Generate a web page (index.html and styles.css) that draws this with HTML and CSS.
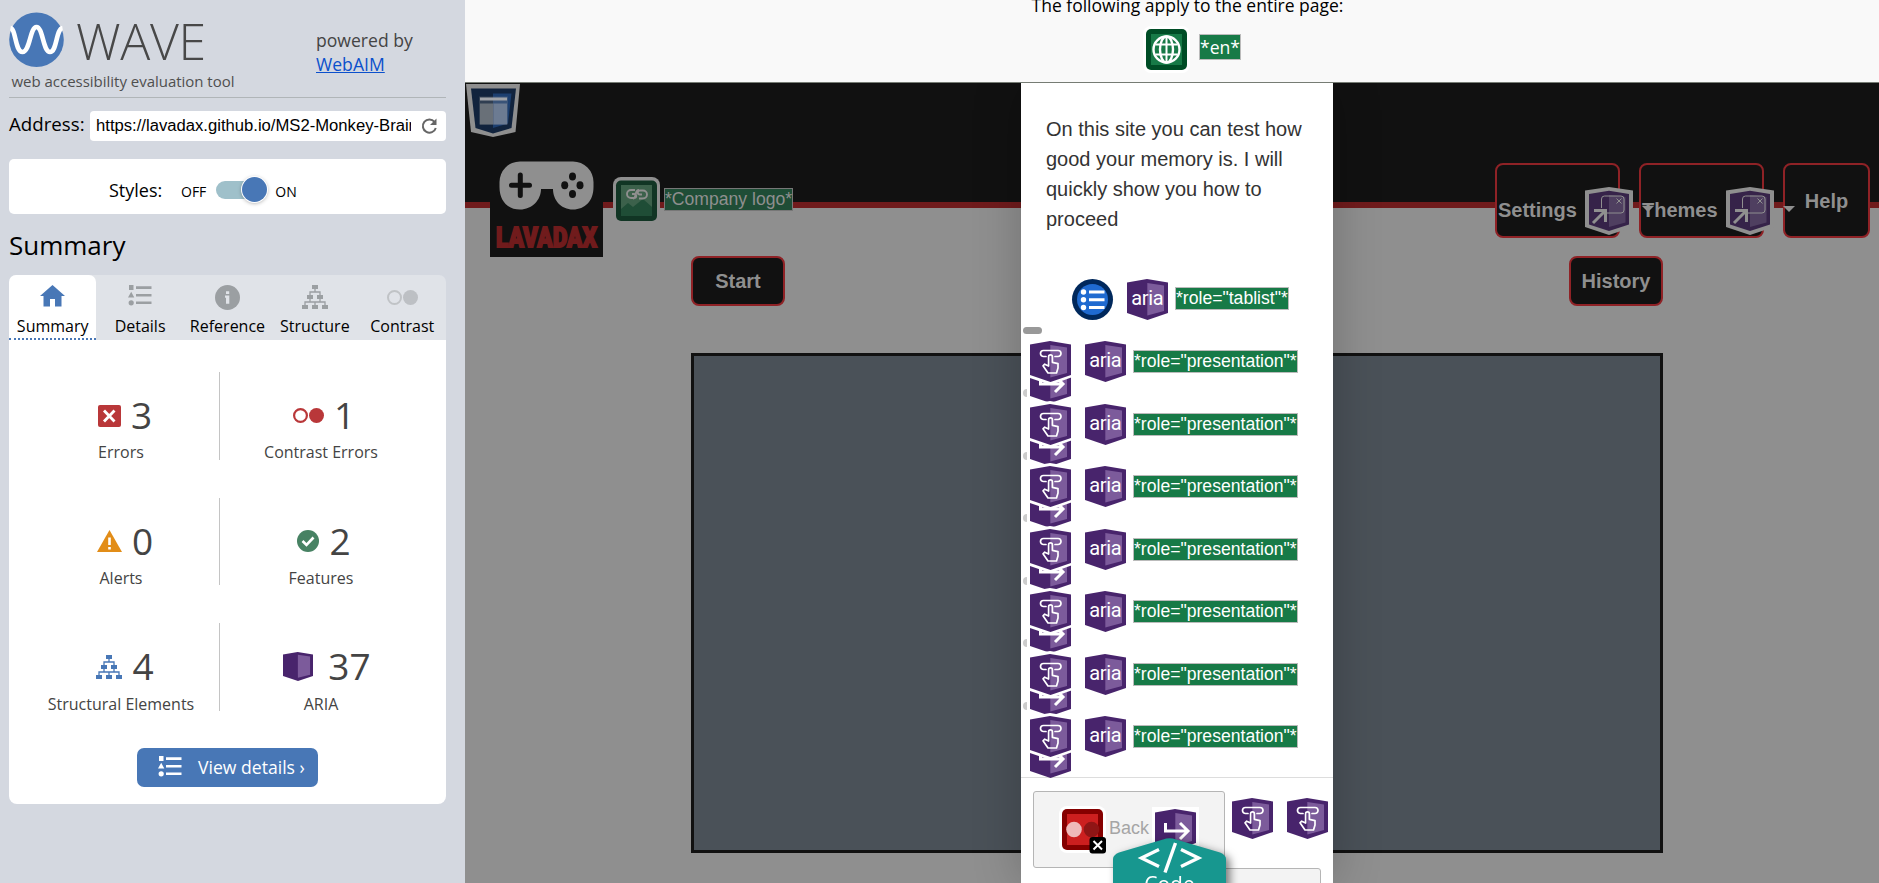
FILE: index.html
```html
<!DOCTYPE html>
<html lang="en">
<head>
<meta charset="utf-8">
<title>WAVE report</title>
<link rel="stylesheet" href="styles.css">
</head>
<body>
<svg width="0" height="0" class="defs" aria-hidden="true">
  <defs>
    <symbol id="cube" viewBox="0 0 41 41">
      <path d="M0 3.500L20 0l21 3.500V34l-20.500 7L0 34z" fill="#48246c"/>
      <path d="M20.300 4L37 6.500v25.500L20.300 36.500z" fill="#7c5b9b"/>
    </symbol>
    <symbol id="list" viewBox="0 0 24 21">
      <path d="M1 0h4.500v5H1zM3.200 6.800L6.300 12.500H0zM8 1.300h15.500v2.600H8zM8 8.900h15.500v2.600H8zM8 16.400h15.500V19H8z"/>
      <circle cx="3.200" cy="17.800" r="2.600"/>
    </symbol>
    <symbol id="tree" viewBox="0 0 26 24">
      <path d="M10 0h6v4h-6zM5 10h6v4H5zM15 10h6v4h-6zM0 20h6v4H0zM10 20h6v4h-6zM20 20h6v4h-6z"/>
      <path d="M13 4v3M8 10V7h10v3M8 14v3M18 14v3M3 20v-3h20v3M13 17v3" fill="none" stroke="currentColor" stroke-width="1.300"/>
    </symbol>
    <symbol id="tap" viewBox="0 0 41 41">
      <use href="#cube" width="41" height="41"/>
      <g fill="none" stroke="#fff" stroke-width="1.700" stroke-linejoin="round" stroke-linecap="round">
        <path d="M16 15.500h-2.500a3 3 0 0 1 0-6h14.500a3 3 0 0 1 0 6H25"/>
        <path d="M18.600 25V15.800a1.900 1.900 0 0 1 3.800 0v5.500l5.600 1.300v4.400l-1.500 5h-8.500l-5-7.200 1.700-1.600z"/>
      </g>
    </symbol>
    <symbol id="aria" viewBox="0 0 41 41">
      <use href="#cube" width="41" height="41"/>
      <text x="4.200" y="25.600" class="aria-word" textLength="32.500">aria</text>
    </symbol>
    <symbol id="arrow" viewBox="0 0 41 41">
      <use href="#cube" width="41" height="41"/>
      <path d="M10.500 14v8H31M25 14l8 8-8 8" fill="none" stroke="#fff" stroke-width="3"/>
    </symbol>
    <symbol id="popup" viewBox="0 0 48 48">
      <path d="M0 3.500L24 0l24 3.500V40L24 48 0 40z" fill="#8f8f8f"/>
      <path d="M4 7l20-3.300L44 7v30.500L24 44 4 37.500z" fill="#362349"/>
      <path d="M24 8l16.500 2v25.500L24 40z" fill="#4f3f60"/>
      <g fill="none" stroke="#8f8f8f">
        <path d="M16.500 21v-9a3 3 0 0 1 3-3H36a3 3 0 0 1 3 3v11a3 3 0 0 1-3 3H22"/>
        <path d="M31.500 11.500l5 5m0-5l-5 5"/>
        <path d="M8 36L20 24M9 23.500h11.500V35" stroke-width="3"/>
      </g>
    </symbol>
  </defs>
</svg>

<div class="app">
  <aside class="sidebar">
    <header class="brand">
      <svg class="brand-logo" width="240" height="97" viewBox="0 0 240 97">
        <circle cx="27.500" cy="39.700" r="27.300" fill="#4877b6"/>
        <path d="M1.500 28C7 29 6 52 13.500 52S21 27 27.500 27 34 52 41 52 47 29 53.500 28" fill="none" stroke="#fff" stroke-width="4.600"/>
        <text x="67" y="59.700" class="wordmark" textLength="130">WAVE</text>
        <text x="2.500" y="87" class="tagline" textLength="223">web accessibility evaluation tool</text>
      </svg>
      <p class="powered">powered by<br><a href="#">WebAIM</a></p>
    </header>

    <div class="address">
      <span class="address-label">Address:</span>
      <div class="address-field">
        <span class="address-url">https://lavadax.github.io/MS2-Monkey-Brain</span>
        <svg width="18" height="18" viewBox="0 0 18 18" fill="none" stroke="#666" stroke-width="2"><path d="M14.500 4.800A6.600 6.600 0 1 0 15.800 11"/><path d="M16.500 1.500v6.500H10z" fill="#666" stroke="none"/></svg>
      </div>
    </div>

    <div class="styles-box">
      <span class="styles-label">Styles:</span>
      <span class="switch-text">OFF</span>
      <span class="switch"><i></i></span>
      <span class="switch-text">ON</span>
    </div>

    <h1>Summary</h1>

    <nav class="tabs">
      <div class="tab active"><svg width="25" height="24" viewBox="0 0 25 24" fill="#4877b6"><path d="M12.500 0L25 11h-3.500v10.500H15V14h-5v7.500H3.500V11H0z"/></svg><span>Summary</span></div>
      <div class="tab"><svg width="24" height="21" class="grey list-icon"><use href="#list"/></svg><span>Details</span></div>
      <div class="tab"><svg width="25" height="25" viewBox="0 0 25 25"><circle cx="12.500" cy="12.500" r="12.500" fill="#9b9fa2"/><path d="M11 6.300h3.200v2.800H11zM10 10.500h4.300v8.200H11v-6h-1z" fill="#e0e3e8"/></svg><span>Reference</span></div>
      <div class="tab"><svg width="26" height="24" class="grey"><use href="#tree"/></svg><span>Structure</span></div>
      <div class="tab"><svg width="31" height="25" viewBox="0 0 31 25"><circle cx="7.500" cy="12.500" r="6.500" fill="none" stroke="#c0c3c6" stroke-width="2"/><circle cx="23.500" cy="12.500" r="7.500" fill="#bdc0c4"/></svg><span>Contrast</span></div>
    </nav>

    <section class="panel">
      <div class="stats">
        <div class="stat"><p><svg width="23" height="22" viewBox="0 0 23 22"><rect width="23" height="22" rx="2" fill="#b93739"/><path d="M6 5.500l10.500 11m0-11L6 16.500" stroke="#fff" stroke-width="2.800"/></svg><b>3</b></p><span>Errors</span></div>
        <div class="stat"><p><svg width="31" height="22" viewBox="0 0 31 22"><circle cx="7.500" cy="10.500" r="6.400" fill="none" stroke="#b93739" stroke-width="2.200"/><circle cx="23.500" cy="10.500" r="7.500" fill="#b93739"/></svg><b>1</b></p><span>Contrast Errors</span></div>
        <div class="stat"><p><svg width="25" height="22" viewBox="0 0 25 22"><path d="M12.500 0L25 22H0z" fill="#e28d18"/><path d="M11.200 7.500h2.600V15h-2.600zM11.200 17h2.600v2.500h-2.600z" fill="#fff"/></svg><b>0</b></p><span>Alerts</span></div>
        <div class="stat"><p><svg width="22" height="22" viewBox="0 0 22 22"><circle cx="11" cy="11" r="11" fill="#478263"/><path d="M5.500 11l4 4 7-7.500" fill="none" stroke="#fff" stroke-width="2.600"/></svg><b>2</b></p><span>Features</span></div>
        <div class="stat"><p><svg width="26" height="24" class="blue"><use href="#tree"/></svg><b>4</b></p><span>Structural Elements</span></div>
        <div class="stat wide"><p><svg width="30" height="29" viewBox="0 0 41 41" preserveAspectRatio="none"><use href="#cube" width="41" height="41"/></svg><b>37</b></p><span>ARIA</span></div>
      </div>
      <a class="view-details"><svg width="24" height="21" class="white"><use href="#list"/></svg>View details ›</a>
    </section>
  </aside>

  <main class="page">
    <section class="notice">
      <p>The following apply to the entire page:</p>
      <div class="notice-row">
        <svg width="47" height="47" viewBox="0 0 47 47"><rect width="47" height="47" rx="8" fill="#fff"/><rect x="3" y="3" width="41" height="41" rx="5" fill="#004d26"/><rect x="8" y="8" width="31" height="31" fill="#177a47"/><g fill="none" stroke="#fff" stroke-width="2.400"><circle cx="23.500" cy="23.500" r="13"/><ellipse cx="23.500" cy="23.500" rx="6.500" ry="13"/><path d="M23.500 10v27M12.500 18.500h22M12.500 28.500h22" stroke-width="2"/></g></svg>
        <span class="tag notice-tag">*en*</span>
      </div>
    </section>

    <section class="site">
      <header class="site-header"></header>
      <div class="site-row"><span class="btn">Start</span><span class="btn">History</span></div>
      <div class="board"></div>
    </section>

    <div class="overlay">
      <svg class="at html-badge" width="54" height="53" viewBox="0 0 54 53"><path d="M0 0h54l-4.500 48L27 53 5 48z" fill="#8f8f8f"/><path d="M5 4.500h45L45.500 44 27 49.500 9.500 44z" fill="#11233d"/><path d="M27 9.500h18.500L42 39.500 27 44z" fill="#1c3f70"/><path d="M13 12.500h29v28H13z" fill="#8f8f8f" opacity=".25"/><path d="M14 13.500h27v3H14z" fill="#a0a3a8"/><path d="M14 19.500h13.500v21H14z" fill="#697078"/><path d="M27.500 19.500H41v21H27.500z" fill="#6c7b92"/></svg>
      <svg class="at site-logo" width="113" height="114" viewBox="0 0 113 114">
        <path d="M0 0h113v114H0z" fill="#111"/>
        <path d="M30 18.500h53a20.500 20.500 0 0 1 20.500 20.500v5C103.500 58 95 66.500 83 66.500 71 66.500 63 57 63 46H51c0 11-9 20.500-21 20.500S9.500 58 9.500 44v-5A20.500 20.500 0 0 1 30 18.500z" fill="#8f8f8f"/>
        <path d="M30.300 32v20.500M21.500 42.300h18" stroke="#111" stroke-width="5" stroke-linecap="round"/>
        <g fill="#111"><ellipse cx="82.500" cy="33.500" rx="3.500" ry="4"/><ellipse cx="74.700" cy="42.300" rx="3.500" ry="4"/><ellipse cx="90" cy="42.300" rx="3.500" ry="4"/><ellipse cx="82.500" cy="51" rx="3.500" ry="4"/></g>
        <text x="6" y="103.500" class="logo-word" textLength="101" lengthAdjust="spacingAndGlyphs">LAVADAX</text>
      </svg>
      <svg class="at alt-badge" width="47" height="45" viewBox="0 0 47 45"><path d="M0 31V8a8 8 0 0 1 8-8h31a8 8 0 0 1 8 8v23z" fill="#8f8f8f"/><rect x="3" y="3.500" width="41" height="40.500" rx="5" fill="#113524"/><rect x="8" y="8" width="31" height="31" fill="#3c614b"/><path d="M8 32l7-6 5 4 10-8 9 8v9H8z" fill="#1f4d36"/><path d="M22 13h-4a4 4 0 0 0 0 8h3c3 0 3-4 0-4h-2M26 21.500h4a4 4 0 0 0 0-8h-3c-3 0-3 4 0 4h2M26 13c-5 0-2 8.500-6 8.500" fill="none" stroke="#8f8f8f" stroke-width="1.900"/></svg>
      <span class="at tag alt-tag">*Company logo*</span>
      <span class="at btn nav-btn settings"><span>Settings</span></span>
      <span class="at btn nav-btn themes"><span>Themes</span></span>
      <span class="at btn nav-btn help">Help</span>
      <svg class="at popup-a" width="48" height="48"><use href="#popup"/></svg>
      <svg class="at popup-b" width="48" height="48"><use href="#popup"/></svg>
      <i class="at caret caret-a"></i><i class="at caret caret-b"></i>
    </div>

    <div class="modal-shade">
    <div class="modal">
      <p class="intro">On this site you can test how good your memory is. I will quickly show you how to proceed</p>
      <div class="tablist">
        <svg width="41" height="41" viewBox="0 0 41 41"><circle cx="20.500" cy="20.500" r="20.500" fill="#00285c"/><circle cx="20.500" cy="20.500" r="15.500" fill="#1f6ad0"/><g fill="#fff"><circle cx="11.500" cy="13" r="2.700"/><circle cx="11.500" cy="20.700" r="2.700"/><circle cx="11.500" cy="28.500" r="2.700"/><path d="M17 11.500h15.500v3H17zM17 19.200h15.500v3H17zM17 27h15.500v3H17z"/></g></svg>
        <svg width="41" height="41"><use href="#aria"/></svg>
        <span class="tag">*role="tablist"*</span>
      </div>
      <i class="dash"></i>
      <ul class="roles">
        <li><svg width="41" height="41" class="next"><use href="#arrow"/></svg><svg width="47" height="47" viewBox="-3 -3 47 47" class="tap"><path d="M-3 1L20 -3l24 4v34.500L20.500 44-3 36z" fill="#fff"/><use href="#tap" width="41" height="41"/></svg><svg width="41" height="41"><use href="#aria"/></svg><span class="tag">*role="presentation"*</span></li>
        <li><svg width="41" height="41" class="next"><use href="#arrow"/></svg><svg width="47" height="47" viewBox="-3 -3 47 47" class="tap"><path d="M-3 1L20 -3l24 4v34.500L20.500 44-3 36z" fill="#fff"/><use href="#tap" width="41" height="41"/></svg><svg width="41" height="41"><use href="#aria"/></svg><span class="tag">*role="presentation"*</span></li>
        <li><svg width="41" height="41" class="next"><use href="#arrow"/></svg><svg width="47" height="47" viewBox="-3 -3 47 47" class="tap"><path d="M-3 1L20 -3l24 4v34.500L20.500 44-3 36z" fill="#fff"/><use href="#tap" width="41" height="41"/></svg><svg width="41" height="41"><use href="#aria"/></svg><span class="tag">*role="presentation"*</span></li>
        <li><svg width="41" height="41" class="next"><use href="#arrow"/></svg><svg width="47" height="47" viewBox="-3 -3 47 47" class="tap"><path d="M-3 1L20 -3l24 4v34.500L20.500 44-3 36z" fill="#fff"/><use href="#tap" width="41" height="41"/></svg><svg width="41" height="41"><use href="#aria"/></svg><span class="tag">*role="presentation"*</span></li>
        <li><svg width="41" height="41" class="next"><use href="#arrow"/></svg><svg width="47" height="47" viewBox="-3 -3 47 47" class="tap"><path d="M-3 1L20 -3l24 4v34.500L20.500 44-3 36z" fill="#fff"/><use href="#tap" width="41" height="41"/></svg><svg width="41" height="41"><use href="#aria"/></svg><span class="tag">*role="presentation"*</span></li>
        <li><svg width="41" height="41" class="next"><use href="#arrow"/></svg><svg width="47" height="47" viewBox="-3 -3 47 47" class="tap"><path d="M-3 1L20 -3l24 4v34.500L20.500 44-3 36z" fill="#fff"/><use href="#tap" width="41" height="41"/></svg><svg width="41" height="41"><use href="#aria"/></svg><span class="tag">*role="presentation"*</span></li>
        <li><svg width="41" height="41" class="next"><use href="#arrow"/></svg><svg width="47" height="47" viewBox="-3 -3 47 47" class="tap"><path d="M-3 1L20 -3l24 4v34.500L20.500 44-3 36z" fill="#fff"/><use href="#tap" width="41" height="41"/></svg><svg width="41" height="41"><use href="#aria"/></svg><span class="tag">*role="presentation"*</span></li>
      </ul>
      <footer class="modal-footer">
        <div class="back-btn">
          <svg width="52" height="52" viewBox="-3 -3 52 52"><rect x="-3" y="-3" width="47" height="47" rx="8" fill="#fff"/><rect width="41" height="41" rx="5" fill="#850000"/><rect x="5" y="5" width="31" height="31" fill="#cc1f1f"/><circle cx="12" cy="20.500" r="7.800" fill="#efb9b9"/><circle cx="29.500" cy="20.500" r="7.800" fill="#8f1515"/><rect x="27.500" y="28" width="16.500" height="16.500" rx="3" fill="#000"/><path d="M31.500 32l8.500 8.500m0-8.500l-8.500 8.500" stroke="#fff" stroke-width="2"/></svg>
          <span>Back</span>
          <svg width="47" height="47" viewBox="-3 -3 47 47"><path d="M-3 -2h47v40l-23 6-24-6z" fill="#fff"/><use href="#arrow" width="41" height="41"/></svg>
        </div>
        <svg width="41" height="41"><use href="#tap"/></svg>
        <svg width="41" height="41"><use href="#tap"/></svg>
      </footer>
      <div class="next-btn"></div>
    </div>
    </div>

    <div class="code-tab">
      <svg width="113" height="60" viewBox="0 0 113 60"><path d="M0 60V21q0-4 6-6.500L50 1.500q6.500-2.500 13 0L107 14.500q6 2.500 6 6.500v39z" fill="#17978f"/><path d="M46 11.500L28.500 20 46 28.500M68 11.500L85.500 20 68 28.500M62.500 5L52 34.500" fill="none" stroke="#fff" stroke-width="3.400"/></svg>
      <span>Code</span>
    </div>
  </main>
</div>
</body>
</html>
```
FILE: styles.css
```css
* { box-sizing: border-box; }
html, body { margin: 0; height: 883px; overflow: hidden; }
body { font-family: "Open Sans", sans-serif; color: #000; background: #8f8f8f; }
p, h1, ul { margin: 0; padding: 0; font-weight: 400; }
svg { display: block; flex: none; overflow: visible; }
.defs { position: absolute; }
.app { display: flex; height: 883px; }
.grey { fill: #9b9fa2; color: #9b9fa2; }
.blue { fill: #4877b6; color: #4877b6; }
.white { fill: #fff; color: #fff; }

/* Sidebar */
.sidebar { width: 465px; flex: none; padding: 0 19px 0 9px; background: #d4d8e0; }
.brand { display: flex; height: 98px; border-bottom: 1px solid #b0b5b8; }
.wordmark { font: 300 50px "Open Sans", sans-serif; fill: #484848; }
.tagline { font-size: 15px; fill: #4f4f4f; }
.powered { margin: 28px 0 0 67px; font-size: 17.600px; line-height: 24px; color: #444; }
.powered a { color: #0b50cc; }
.address { display: flex; margin-top: 13px; }
.address-label { width: 81px; font-size: 18.700px; line-height: 26px; white-space: nowrap; }
.address-field { display: flex; align-items: center; gap: 9px; width: 356px; height: 30px; padding-left: 6px; background: #fff; border-radius: 4px; }
.address-url { width: 315px; overflow: hidden; white-space: nowrap; font: 16.650px/28px "Liberation Sans", Arial, sans-serif; }
.styles-box { display: flex; align-items: center; height: 55px; margin-top: 18px; padding: 7px 0 0 100px; background: #fff; border-radius: 5px; }
.styles-label { width: 72px; font-size: 18px; }
.switch-text { font-size: 14px; padding-top: 2px; }
.switch { width: 51px; height: 18px; margin: 0 8px 0 10px; border-radius: 9px; background: #9fc0ca; }
.switch i { display: block; width: 25px; height: 25px; margin: -4px 0 0 26px; border-radius: 50%; background: #4877b6; box-shadow: 0 0 0 1px #fff, 0 1px 4px rgba(0,0,0,.4); }
h1 { height: 61px; font-size: 26px; line-height: 62px; }
.tabs { display: flex; height: 65px; background: #e0e3e8; border-radius: 7px 7px 0 0; }
.tab { display: flex; flex-direction: column; align-items: center; width: 87.4px; height: 65px; padding-top: 10px; font-size: 16px; }
.tab svg { margin-bottom: auto; }
.tab span { line-height: 22px; margin-bottom: 3px; }
.tab.active { background: #fff; border-radius: 7px 7px 0 0; border-bottom: 2px dotted #4877b6; }
.tab.active span { margin-bottom: 1px; }
.panel { height: 464px; padding-top: 32px; background: #fff; border-radius: 0 0 8px 8px; }
.stats { display: grid; grid-template-columns: 198px 202px; row-gap: 38px; margin-left: 13px; }
.stat { height: 87.500px; text-align: center; color: #444; }
.stat:nth-child(odd) { border-right: 1px solid #c4c4c4; }
.stat:nth-child(odd) span { padding-left: 1px; }
.stat p { display: flex; align-items: center; justify-content: center; gap: 10px; height: 69px; padding: 19px 0 0 6px; }
.stat:nth-child(odd) p { padding-left: 9px; }
.stat p svg { margin-top: -1px; }
.stat p b { margin-top: -2px; }
.stat:nth-child(n+5) span { padding-top: 1px; }
.stat b { font-weight: 400; font-size: 37px; line-height: 50px; }
.stat.wide p { gap: 15px; padding-left: 12px; }
.stat span { display: block; font-size: 16px; line-height: 22px; }
.view-details { display: flex; align-items: center; gap: 16px; width: 181px; height: 39px; margin: 37px 0 0 128px; padding: 0 0 1px 21px; border-radius: 7px; background: #4877b6; color: #fff; font-size: 17.600px; white-space: nowrap; }

/* Page notice */
.page { position: relative; width: 1414px; }
.notice { height: 83px; padding-left: 31px; background: #f9f9f9; border-bottom: 1px solid #767c74; text-align: center; }
.notice p { height: 26px; margin-top: 0; line-height: 10px; font-size: 17.500px; }
.notice-row { display: flex; padding-left: 647px; gap: 9px; }
.tag { align-self: center; border: 1px solid #bbb; background: #177a47; color: #fff; font: 17.600px/21px "Liberation Sans", Arial, sans-serif; white-space: nowrap; }
.notice-tag { margin-top: -5px; font: 17.600px/24px "Open Sans", sans-serif; }

/* Dimmed site */
.site { height: 800px; background: #8f8f8f; }
.site-header { height: 125px; background: #111; border-bottom: 6px solid #701b1c; }
.site-row { display: flex; justify-content: space-between; padding: 48px 216px 47px 226px; }
.btn { display: flex; align-items: center; justify-content: center; width: 94px; height: 50px; border: 2px solid #8f2226; border-radius: 8px; background: #111; color: #8f8f8f; font: bold 20px "Liberation Sans", Arial, sans-serif; }
.board { width: 972px; height: 500px; margin-left: 226px; border: 3px solid #111; background: #4a5158; }

/* Badges laid over the site */
.at { position: absolute; }
.html-badge { left: 1px; top: 84px; }
.site-logo { left: 25px; top: 143px; }
.logo-word { font: 900 27px Roboto, sans-serif; fill: #701b1c; stroke: #701b1c; stroke-width: 1.800; }
.alt-badge { left: 148px; top: 177px; }
.alt-tag { left: 199px; top: 188px; border-color: #777; background: #1f4d36; color: #8f8f8f; }
.nav-btn { top: 163px; width: 125px; height: 75px; }
.settings { left: 1030px; justify-content: flex-start; padding: 20px 0 0 1px; }
.themes { left: 1174px; justify-content: flex-start; padding: 20px 0 0 1px; }
.help { left: 1318px; width: 87px; padding-top: 2px; }
.popup-a { left: 1120px; top: 187px; }
.popup-b { left: 1261px; top: 187px; }
.caret { top: 206px; border: 6px solid transparent; border-top-color: #8f8f8f; border-bottom: 0; }
.caret-a { left: 1177px; }
.caret-b { left: 1318px; }

/* Dialog */
.modal-shade { position: absolute; left: 496px; top: 83px; width: 432px; height: 800px; padding: 0 60px; overflow: hidden; }
.modal { height: 800px; padding-top: 31px; background: #fff; box-shadow: 0 0 45px rgba(0,0,0,.22); }
.intro { padding: 0 25px; font: 20px/30px "Liberation Sans", Arial, sans-serif; color: #333; }
.tablist { display: flex; align-items: center; margin: 45px 0 0 51px; }
.tablist svg { margin-right: 14px; }
.tablist .tag { margin: -2px 0 0 -7px; }
.aria-word { font: 20px Roboto, sans-serif; fill: #fff; }
.dash { display: block; width: 19px; height: 7px; margin: 7px 0 0 2px; border-radius: 4px; background: #999; }
.roles { list-style: none; height: 444px; padding-top: 7px; border-bottom: 1px solid #ddd; }
.roles li { position: relative; display: flex; height: 62.500px; padding-left: 9px; }
.roles .tap { position: relative; margin: -3px 11px 0 -3px; }
.roles .tag { margin: 9px 0 0 7px; align-self: flex-start; }
.roles .next { position: absolute; left: 9px; top: 21px; }
.roles li::before { content: ""; position: absolute; left: 2px; top: 48px; width: 4px; height: 8px; border-radius: 4px 0 0 4px; background: #ccc; }
.roles li:last-child::before { display: none; }
.modal-footer { display: flex; gap: 14px; padding: 13px 0 0 12px; }
.modal-footer > svg { margin-top: 7px; }
.back-btn { display: flex; width: 192px; height: 77px; margin-right: -7px; padding: 14px 0 0 25px; border: 1px solid #b5b5b5; border-radius: 3px; background: #f3f3f3; color: #a5a5a5; font: 18px/44px "Liberation Sans", Arial, sans-serif; }
.back-btn span { width: 43px; margin-right: 0; margin-left: -2px; }
.next-btn { width: 110px; height: 60px; margin-left: 190px; border: 1px solid #b5b5b5; border-radius: 3px; background: #f3f3f3; }
.code-tab { position: absolute; left: 648px; top: 838px; width: 113px; height: 60px; filter: drop-shadow(4px 3px 4px rgba(0,0,0,.5)); }
.code-tab span { position: absolute; left: 0; right: 0; top: 31px; text-align: center; color: #fff; font-size: 21px; line-height: 30px; }
```
